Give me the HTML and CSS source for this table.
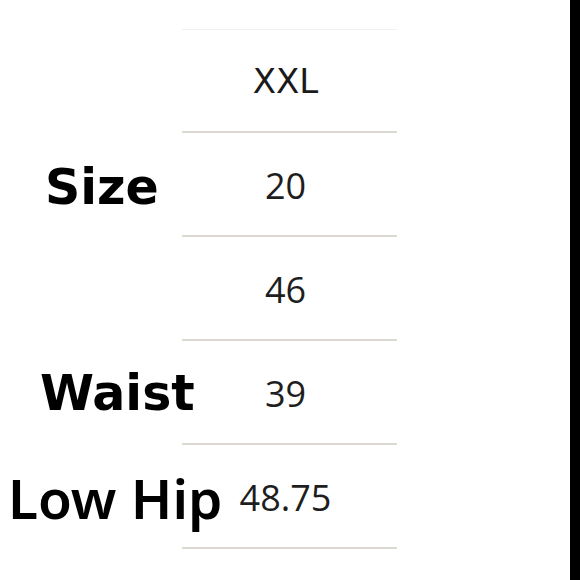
FILE: index.html
```html
<!DOCTYPE html>
<html>
<head>
<meta charset="utf-8">
<link rel="stylesheet" href="styles.css">
</head>
<body>
<div class="page">
  <div class="sheet">
    <div class="row row-first">
      <div class="value value-head">XXL</div>
    </div>
    <div class="row">
      <div class="label label-size">Size</div>
      <div class="value">20</div>
    </div>
    <div class="row">
      <div class="value">46</div>
    </div>
    <div class="row">
      <div class="label label-waist">Waist</div>
      <div class="value">39</div>
    </div>
    <div class="row">
      <div class="label label-hip">Low Hip</div>
      <div class="value">48.75</div>
    </div>
  </div>
  <div class="edge"></div>
</div>
</body>
</html>
```
FILE: styles.css
```css
html, body {
  margin: 0;
  padding: 0;
  background: #ffffff;
}
.page {
  display: flex;
  width: 580px;
  height: 580px;
  overflow: hidden;
}
.sheet {
  flex: 1;
  padding-top: 29px;
}
.edge {
  width: 10px;
  background: #000000;
}
.row {
  display: grid;
  grid-template-columns: 182px 215px;
  height: 104px;
}
.value {
  grid-column: 2;
  grid-row: 1;
  display: flex;
  align-items: center;
  justify-content: center;
  padding-right: 8px;
  padding-top: 2px;
  border-bottom: 2px solid #dcd9d3;
  font-family: "Open Sans", sans-serif;
  font-weight: 400;
  font-size: 36px;
  color: #1e1e1e;
  box-sizing: border-box;
}
.row-first .value {
  border-top: 1px solid #f0f0f0;
  padding-top: 0;
}
.value-head {
  font-family: "DejaVu Sans", sans-serif;
  font-weight: 400;
  font-size: 34px;
  color: #1a1a1a;
}
.label {
  grid-column: 1 / 3;
  grid-row: 1;
  align-self: center;
  color: #000000;
  line-height: 1;
}
.label-size {
  padding-left: 45px;
  padding-top: 4px;
  font-family: "DejaVu Sans", sans-serif;
  font-size: 49px;
  font-weight: 700;
}
.label-waist {
  padding-left: 40px;
  font-family: "DejaVu Sans", sans-serif;
  font-size: 49px;
  font-weight: 700;
}
.label-hip {
  padding-left: 8px;
  font-family: "Noto Sans", sans-serif;
  font-size: 55px;
  font-weight: 600;
}
```
